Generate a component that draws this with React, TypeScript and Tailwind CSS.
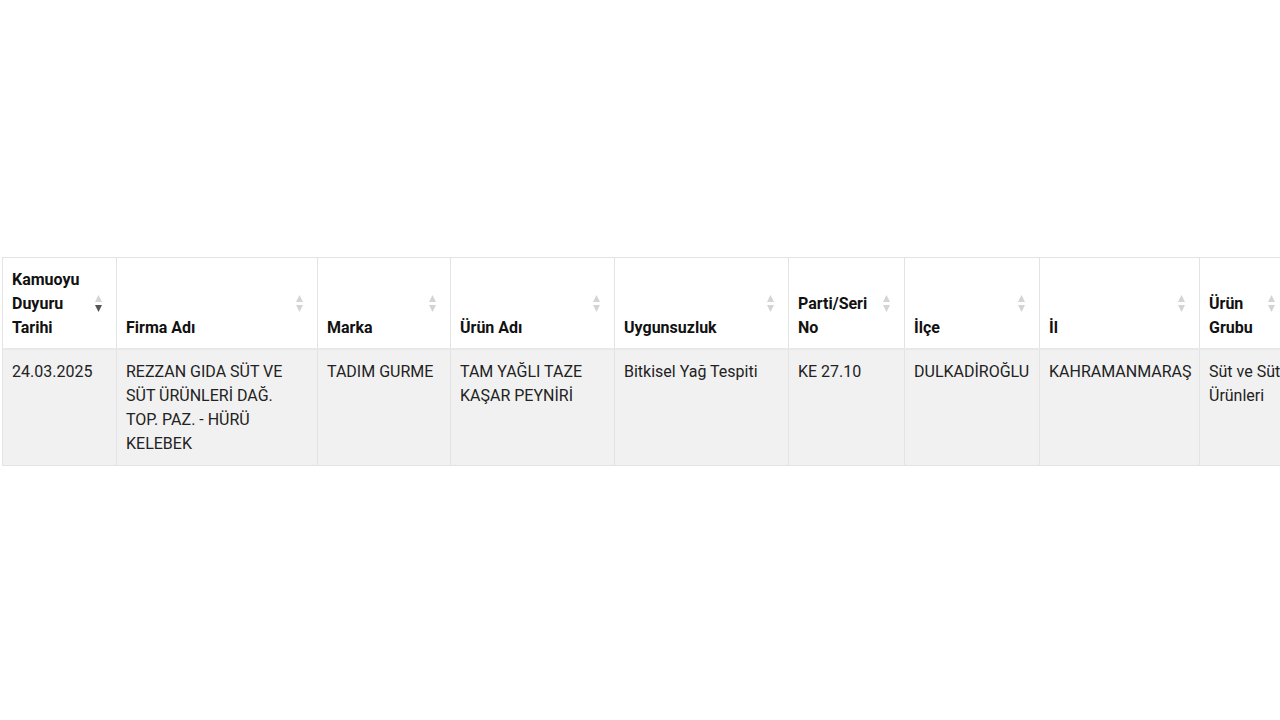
import type { ReactNode } from "react";

type Col = { label: ReactNode; width: number; active?: boolean };

const columns: Col[] = [
  { label: "Kamuoyu Duyuru Tarihi", width: 114, active: true },
  { label: "Firma Adı", width: 201 },
  { label: "Marka", width: 133 },
  { label: "Ürün Adı", width: 164 },
  { label: "Uygunsuzluk", width: 174 },
  { label: "Parti/Seri No", width: 116 },
  { label: "İlçe", width: 135 },
  { label: "İl", width: 160 },
  { label: "Ürün Grubu", width: 90 },
];

const row = [
  "24.03.2025",
  "REZZAN GIDA SÜT VE SÜT ÜRÜNLERİ DAĞ. TOP. PAZ. - HÜRÜ KELEBEK",
  "TADIM GURME",
  "TAM YAĞLI TAZE KAŞAR PEYNİRİ",
  "Bitkisel Yağ Tespiti",
  "KE 27.10",
  "DULKADİROĞLU",
  "KAHRAMANMARAŞ",
  "Süt ve Süt Ürünleri",
];

function SortIcon({ active }: { active?: boolean }) {
  return (
    <svg width="7" height="18" viewBox="0 0 7 18" className="block">
      <path d="M3.5 0 L7 7 L0 7 Z" fill="#d4d4d4" />
      <path d="M0 10 L7 10 L3.5 17 Z" fill={active ? "#555555" : "#d4d4d4"} />
    </svg>
  );
}

export default function App() {
  return (
    <div
      className="w-[1280px] h-[720px] bg-white overflow-hidden pt-[257px] pl-[2px]"
      style={{ fontFamily: "Roboto, 'Noto Sans', sans-serif" }}
    >
      <table className="table-fixed border-collapse text-[16px] leading-6 text-[#222]" style={{ width: 1287 }}>
        <colgroup>
          {columns.map((c, i) => (
            <col key={i} style={{ width: c.width }} />
          ))}
        </colgroup>
        <thead>
          <tr className="border-b-2 border-[#e8e8e8]">
            {columns.map((c, i) => (
              <th
                key={i}
                className="relative border border-[#e3e3e3] align-bottom text-left font-bold text-[#111] pl-[9px] pr-[32px] pt-[10px] pb-[8px]"
              >
                {c.label}
                <span className="absolute right-[14px] top-[37px]">
                  <SortIcon active={c.active} />
                </span>
              </th>
            ))}
          </tr>
        </thead>
        <tbody>
          <tr className="bg-[#f1f1f1]">
            {row.map((v, i) => (
              <td
                key={i}
                className={
                  i === row.length - 1
                    ? "border border-[#e3e3e3] align-top pl-[9px] pr-0 pt-[10px] pb-[9px]"
                    : "border border-[#e3e3e3] align-top pl-[9px] pr-[9px] pt-[10px] pb-[9px]"
                }
              >
                {v}
              </td>
            ))}
          </tr>
        </tbody>
      </table>
    </div>
  );
}
